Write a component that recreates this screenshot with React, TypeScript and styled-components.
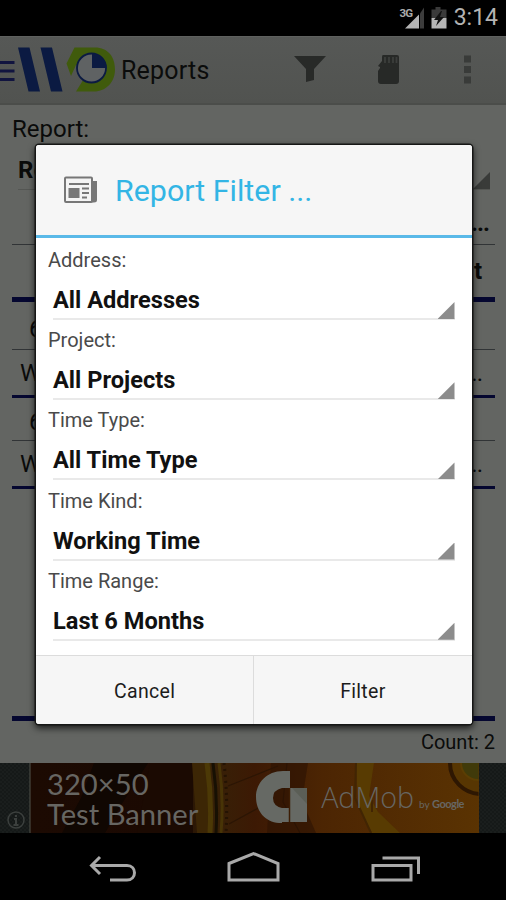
import React from "react";
import styled, { createGlobalStyle } from "styled-components";

const Global = createGlobalStyle`
  * { box-sizing: border-box; }
  body { margin: 0; background: #000; font-family: Roboto, "Noto Sans", sans-serif; }
`;

const Screen = styled.div`
  position: relative;
  width: 506px;
  height: 900px;
  display: flex;
  flex-direction: column;
  overflow: hidden;
  background: #000;
`;

const StatusBar = styled.header`
  height: 36px;
  flex: none;
  display: flex;
  align-items: center;
  justify-content: flex-end;
  padding-right: 8px;
  color: #b3b3b3;
  font-size: 23px;
  line-height: 38px;
`;

const StatusIcons = styled.svg`
  width: 50px;
  height: 36px;
  margin-right: 5px;
`;

const ActionBar = styled.div`
  height: 69px;
  flex: none;
  display: flex;
  align-items: center;
  background: linear-gradient(#565856, #515350);
  border-bottom: 2px solid #4b4d4a;
  border-top: 1px solid #5f615f;
`;

const Brand = styled.svg`
  width: 117px;
  height: 66px;
  flex: none;
`;

const AppTitle = styled.h1`
  margin: 1px 0 0 4px;
  font-size: 25px;
  font-weight: 400;
  color: #0b0c0b;
  flex: 1;
  letter-spacing: 0.2px;
`;

const Actions = styled.svg`
  width: 226px;
  height: 66px;
  flex: none;
`;

const Report = styled.main`
  height: 658px;
  flex: none;
  display: flex;
  flex-direction: column;
  padding: 0 11px 0 12px;
  background: #636562;
  color: #0a0b0a;
`;

const ReportLabel = styled.div`
  height: 48px;
  font-size: 24px;
  line-height: 48px;
`;

const ReportSpinner = styled.div`
  height: 37px;
  margin: 0 5px 0 6px;
  display: flex;
  align-items: flex-end;
  justify-content: space-between;
  border-bottom: 1px solid #545653;
  font-size: 24px;
  font-weight: 700;
  line-height: 37px;
`;

const Corner = styled.i<{ $dark?: boolean }>`
  width: 17px;
  height: 17px;
  flex: none;
  background: ${(p) => (p.$dark ? "#393b39" : "#8c8c8c")};
  clip-path: polygon(100% 0, 100% 100%, 0 100%);
`;

const TableRow = styled.div<{ $height: number; $rule: number; $bold?: boolean; $indent?: number; $end?: number; $drop?: number }>`
  height: ${(p) => p.$height}px;
  flex: none;
  display: flex;
  align-items: center;
  justify-content: space-between;
  padding: ${(p) => p.$drop ?? 0}px ${(p) => p.$end ?? 13}px 0 ${(p) => p.$indent ?? 8}px;
  border-bottom: ${(p) => p.$rule}px solid ${(p) => (p.$rule > 1 ? "#050730" : "#313436")};
  font-size: 24px;
  font-weight: ${(p) => (p.$bold ? 700 : 400)};
`;

const Dots = styled.span`
  letter-spacing: -1px;
`;

const Count = styled.div`
  height: 42px;
  text-align: right;
  font-size: 20px;
  line-height: 42px;
`;

const Ad = styled.section`
  height: 70px;
  flex: none;
  position: relative;
  background: #141817;
`;

const AdArt = styled.svg`
  display: block;
  width: 506px;
  height: 70px;
`;

const AdOverlay = styled.div`
  position: absolute;
  inset: 0 28px 0 47px;
  display: flex;
  justify-content: space-between;
  align-items: center;
  color: #676662;
  font-family: Lato, sans-serif;
`;

const AdHeadline = styled.div`
  font-size: 29.2px;
  line-height: 30px;
  padding-top: 2px;
  white-space: nowrap;
`;

const AdBrand = styled.div`
  display: flex;
  align-items: baseline;
  gap: 5px;
  padding: 0 14px 3px 0;
  font-family: "Open Sans", sans-serif;
  font-weight: 300;
  font-size: 28.7px;
  white-space: nowrap;
`;

const ByLine = styled.small`
  font-family: Lato, sans-serif;
  font-size: 10px;
  font-weight: 400;
`;

const ByName = styled.b`
  font-size: 11px;
  font-weight: 700;
  letter-spacing: -0.5px;
`;

const NavBar = styled.nav`
  height: 67px;
  flex: none;
  background: #000;
`;

const Dialog = styled.div`
  position: absolute;
  left: 36px;
  top: 145px;
  width: 435.5px;
  height: 579px;
  display: flex;
  flex-direction: column;
  border-radius: 3px;
  overflow: hidden;
  background: #fff;
  box-shadow: 0 0 0 1.5px #161716, 0 3px 7px 1px rgba(0, 0, 0, 0.75);
`;

const DialogHeader = styled.div`
  height: 93px;
  flex: none;
  display: flex;
  align-items: center;
  padding-left: 27px;
  background: #f6f6f6;
  border-bottom: 3px solid #5ab9e8;
`;

const DialogTitle = styled.h2`
  margin: 0 0 0 16px;
  font-size: 30.4px;
  font-weight: 400;
  color: #33b5e5;
`;

const Fields = styled.div`
  height: 417px;
  flex: none;
  padding: 6px 16px 0 12px;
`;

const Field = styled.label`
  display: block;
  height: 80.2px;
`;

const FieldName = styled.span`
  display: block;
  height: 33px;
  font-size: 20px;
  line-height: 33px;
  color: #4a4a4a;
`;

const FieldValue = styled.span`
  display: flex;
  justify-content: space-between;
  align-items: flex-end;
  height: 43px;
  margin: 0 1px 0 5px;
  border-bottom: 2px solid #e9e9e9;
  font-size: 23.6px;
  line-height: 36px;
  font-weight: 700;
  color: #111;
`;

const SpinnerCorner = styled(Corner)`
  margin-bottom: -1px;
`;

const Buttons = styled.div`
  flex: 1;
  display: flex;
  border-top: 1px solid #dcdcdc;
`;

const DialogButton = styled.button`
  flex: 1;
  border: 0;
  padding: 3px 0 0;
  background: #f6f6f6;
  font: 400 19.5px Roboto, sans-serif;
  letter-spacing: 0.3px;
  color: #1c1c1c;
  & + & { border-left: 1px solid #dcdcdc; }
`;

const FILTERS = [
  ["Address:", "All Addresses"],
  ["Project:", "All Projects"],
  ["Time Type:", "All Time Type"],
  ["Time Kind:", "Working Time"],
  ["Time Range:", "Last 6 Months"],
];

const NewsIcon = () => (
  <svg width="36" height="28" viewBox="0 0 36 28">
    <path d="M29 5h5v19q0 2.500-3 2.500H4" fill="#777" />
    <rect x="2" y="1.500" width="27" height="24.500" rx="1" fill="#f4f4f4" stroke="#777" strokeWidth="2" />
    <path d="M6 8h20M19 12.500h7M19 17h7M19 21.500h5" stroke="#777" strokeWidth="2" />
    <rect x="5.500" y="12" width="11" height="10" fill="#777" />
  </svg>
);

export default function App() {
  return (
    <Screen>
      <Global />
      <StatusBar>
        <StatusIcons viewBox="399 0 50 36">
          <text x="399.500" y="17" fontSize="11.500" fontWeight="700" fill="#aaa" letterSpacing="-.8">3G</text>
          <path d="M405 28.500 419 14.500V28.500Z" fill="#b5b5b5" />
          <path d="M420 13.500 424 7.500V28.500H420Z" fill="#3c3c3c" />
          <path d="M431.500 9.500h4V7h5v2.500h6V18h-15Z" fill="#3a3a3a" />
          <path d="M431.500 18h15v10.500h-15Z" fill="#b5b5b5" />
          <path d="m441 11-7 9h4l-2 6 8-9h-4l2-6Z" fill="#111" />
        </StatusIcons>
        3:14
      </StatusBar>

      <ActionBar>
        <Brand viewBox="0 37 117 66">
          <path d="M0 62.500h14.500M0 71h14.500M0 79.500h14.500" stroke="#11143f" strokeWidth="3" />
          <path d="M18 47.500H29.500L40 91.500H28.500ZM40.500 47.500H52L62.500 91.500H51Z" fill="#0b1a42" />
          <path d="M74.500 47.500H95C108 47.500 115 57 115 69.500S106 91.500 94 91.500H76L82.500 81L91 68L76 65L71 76L66.500 63.500Z" fill="#405b0c" />
          <circle cx="91.500" cy="68" r="14.500" fill="#5f6263" stroke="#0b1a42" strokeWidth="1.800" />
          <path d="M92 68V53.500A14.500 14.500 0 0 1 106.500 68Z" fill="#0b1a42" />
        </Brand>
        <AppTitle>Reports</AppTitle>
        <Actions viewBox="280 37 226 66">
          <path d="M294 56H326L314 69V80L306 82V69Z" fill="#282a28" />
          <path d="M383 55H397Q399 55 399 57V81Q399 84 396 84H381Q378 84 378 81V71L380 68V67L378 66L382 61V57Q382 55 383 55Z" fill="#272927" />
          <path d="M385 57v6M389 57v6M393 57v6M396.500 57v6" stroke="#3c3e3c" strokeWidth="1.800" />
          <path d="M464 55.500h7v7h-7zM464 66h7v7h-7zM464 76.500h7v7h-7z" fill="#393b39" />
        </Actions>
      </ActionBar>

      <Report>
        <ReportLabel>Report:</ReportLabel>
        <ReportSpinner>Report<Corner $dark /></ReportSpinner>
        <TableRow $height={55} $rule={1} $bold $end={6} $drop={12}><span /><Dots>...</Dots></TableRow>
        <TableRow $height={57} $rule={5} $bold><span /><span>t</span></TableRow>
        <TableRow $height={48} $rule={1} $indent={17} $drop={6}><span>6</span></TableRow>
        <TableRow $height={48} $rule={3}><span>W</span><Dots>...</Dots></TableRow>
        <TableRow $height={43} $rule={1} $indent={17} $drop={5}><span>6</span></TableRow>
        <TableRow $height={48} $rule={3}><span>W</span><Dots>...</Dots></TableRow>
        <TableRow $height={232} $rule={5} />
        <Count>Count: 2</Count>
      </Report>

      <Ad>
        <AdArt viewBox="0 763 506 70">
          <defs>
            <linearGradient id="amber">
              <stop offset="0" stopColor="#1c0a02" />
              <stop offset=".3" stopColor="#1b0902" />
              <stop offset=".41" stopColor="#372107" />
              <stop offset=".5" stopColor="#3c1904" />
              <stop offset=".65" stopColor="#4c2503" />
              <stop offset="1" stopColor="#5a3302" />
            </linearGradient>
            <pattern id="mesh" x="0" y="763" width="4" height="4" patternUnits="userSpaceOnUse">
              <rect width="4" height="4" fill="#1a1e1d" />
              <path d="M0 0h2v2H0zM2 2h2v2H2z" fill="#151918" />
            </pattern>
            <clipPath id="banner"><rect x="30" y="763" width="448.500" height="70" /></clipPath>
          </defs>
          <rect y="763" width="506" height="70" fill="url(#mesh)" />
          <rect x="30" y="763" width="449" height="70" fill="url(#amber)" />
          <g clipPath="url(#banner)">
            <path d="M94 763h54l-27 42-16 28H62l19-35Z" fill="#100702" />
            <path d="M150 763h43v70h-56Z" fill="#1b0a02" />
            <path d="M192 763h19v70h-14Z" fill="#3c2605" />
            <path d="M207 763q5 35 3 70" fill="none" stroke="#4c3906" strokeWidth="5" />
            <path d="M213 763q5 35 3 70" fill="none" stroke="#171003" strokeWidth="3" />
            <path d="M219 763q5 35 2 70" fill="none" stroke="#483406" strokeWidth="3" />
            <path d="M224 763q4 35 2 70" fill="none" stroke="#241303" strokeWidth="3" strokeDasharray="2 4" />
            <path d="M228 786l50-20M229 824l42-23M287 763l-4 39 17 31" fill="none" stroke="#2b1504" strokeWidth="1.200" />
            <path d="M271 763h37l-6 38 14 32h-49Z" fill="#2b1203" opacity=".6" />
            <path d="M356 763h18l-5 33 9 16 22 21h-28l-14-28Z" fill="#583b02" />
            <path d="M356 763l-1 35 16 35M372 800v12" fill="none" stroke="#412503" strokeWidth="2" />
            <circle cx="481" cy="763" r="31" fill="#573602" stroke="#2e1702" strokeWidth="4" />
            <circle cx="478" cy="763" r="17" fill="#403a0a" stroke="#5b3e03" strokeWidth="2" />
          </g>
          <path d="M30 763v70" stroke="#51534b" />
          <path d="M290 771v17h-8q-9 2-9 10t9 10v15h-3c-14-1-23-12-23-26s11-26 27-26Z" fill="#666964" />
          <path d="M290 788h17v34h-17Z" fill="#666964" />
          <path d="M281 808h9v14h-9Z" fill="#666964" />
          <path d="M292 788h15v16Z" fill="#5b5e56" />
          <circle cx="16" cy="820" r="8" fill="none" stroke="#3c403e" strokeWidth="1.500" />
          <path d="M16 815v2M14 819h2v6M13.500 825h5" fill="none" stroke="#3c403e" strokeWidth="2" />
          <path d="M289.500 788v34" stroke="#3c1d04" strokeWidth="1.500" />
        </AdArt>
        <AdOverlay>
          <AdHeadline>320×50<br />Test Banner</AdHeadline>
          <AdBrand>AdMob<ByLine>by <ByName>Google</ByName></ByLine></AdBrand>
        </AdOverlay>
      </Ad>

      <NavBar>
        <svg width="506" height="67" viewBox="0 833 506 67" fill="none" stroke="#a9a9a9" strokeWidth="3">
          <path d="M100 857 91.500 865.500 100 874M92 865.500H127C137 865.500 137 880 127 880H110" />
          <path d="M229 863.500 253.500 853.500 278 863.500V880H229Z" />
          <path d="M373 865.500H411V880H373ZM382.500 858H418.500V874" />
        </svg>
      </NavBar>

      <Dialog role="dialog">
        <DialogHeader>
          <NewsIcon />
          <DialogTitle>Report Filter ...</DialogTitle>
        </DialogHeader>
        <Fields>
          {FILTERS.map(([name, value]) => (
            <Field key={name}>
              <FieldName>{name}</FieldName>
              <FieldValue>{value}<SpinnerCorner /></FieldValue>
            </Field>
          ))}
        </Fields>
        <Buttons>
          <DialogButton>Cancel</DialogButton>
          <DialogButton>Filter</DialogButton>
        </Buttons>
      </Dialog>
    </Screen>
  );
}
